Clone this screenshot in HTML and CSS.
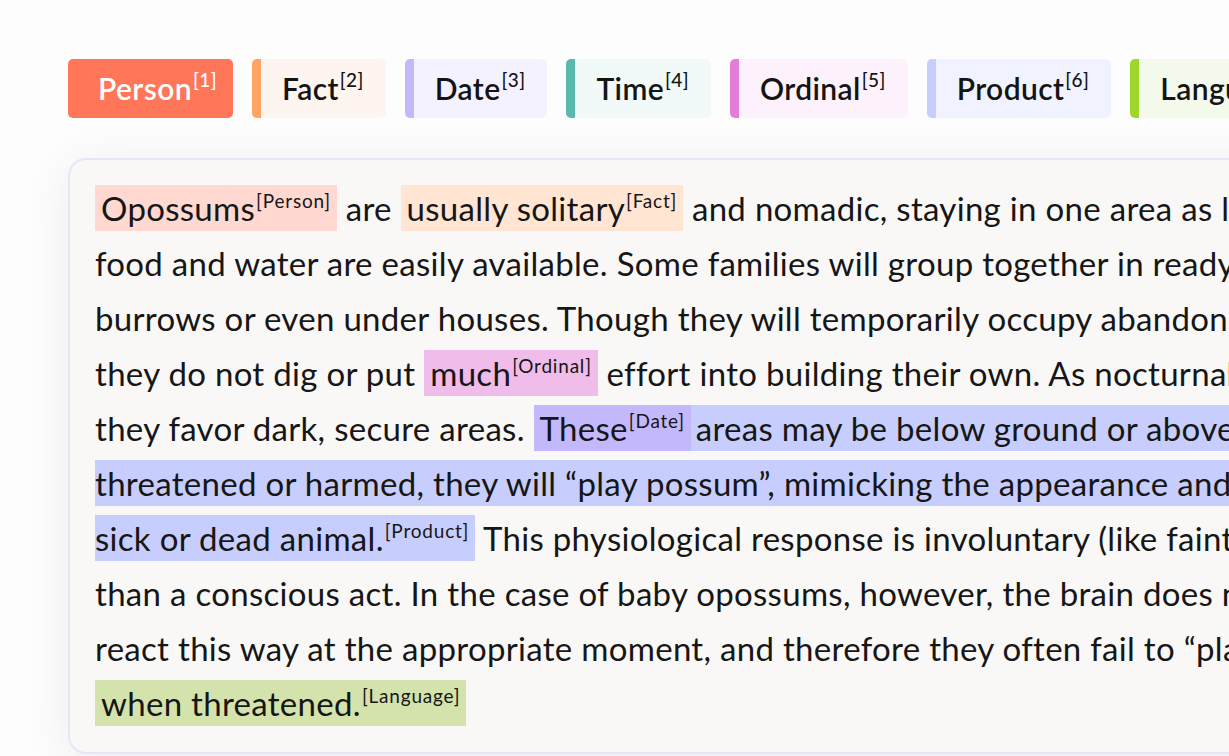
FILE: index.html
```html
<!DOCTYPE html>
<html lang="en">
<head>
<meta charset="utf-8">
<title>Entity highlighter</title>
<link rel="stylesheet" href="styles.css">
</head>
<body>
<main class="page">
  <div class="legend">
    <span class="tag tag-person">Person<sup>[1]</sup></span>
    <span class="tag tag-fact">Fact<sup>[2]</sup></span>
    <span class="tag tag-date">Date<sup>[3]</sup></span>
    <span class="tag tag-time">Time<sup>[4]</sup></span>
    <span class="tag tag-ordinal">Ordinal<sup>[5]</sup></span>
    <span class="tag tag-product">Product<sup>[6]</sup></span>
    <span class="tag tag-language">Language<sup>[7]</sup></span>
  </div>
  <section class="card">
    <p class="text"><span class="hl hl-person">Opossums<sup>[Person]</sup></span> are <span class="hl hl-fact">usually solitary<sup>[Fact]</sup></span> and nomadic, staying in one area as long as<br>food and water are easily available. Some families will group together in ready-made<br>burrows or even under houses. Though they will temporarily occupy abandoned burrows,<br>they do not dig or put <span class="hl hl-ordinal">much<sup>[Ordinal]</sup></span> effort into building their own. As nocturnal animals,<br>they favor dark, secure areas. <span class="hl hl-product"><span class="hl-date">These<sup>[Date]</sup></span> areas may be below ground or above. When<br>threatened or harmed, they will “play possum”, mimicking the appearance and smell of a<br>sick or dead animal.<sup>[Product]</sup></span> This physiological response is involuntary (like fainting), rather<br>than a conscious act. In the case of baby opossums, however, the brain does not always<br>react this way at the appropriate moment, and therefore they often fail to “play dead”<br><span class="hl hl-language">when threatened.<sup>[Language]</sup></span></p>
  </section>
</main>
</body>
</html>
```
FILE: styles.css
```css
html, body {
  margin: 0;
  padding: 0;
  background: #fdfdfd;
  overflow: hidden;
}

.page {
  width: 1229px;
  height: 756px;
  padding: 59px 0 0 68px;
  box-sizing: border-box;
  font-family: "Lato", "Liberation Sans", sans-serif;
  color: #161616;
}

.legend {
  display: flex;
  gap: 19px;
  flex-wrap: nowrap;
  width: max-content;
}

.tag {
  flex-shrink: 0;
  display: block;
  height: 59px;
  line-height: 59px;
  box-sizing: border-box;
  padding: 0 21px 0 21px;
  border-left: 9px solid;
  border-radius: 5px;
  font-size: 30px;
  font-weight: 600;
  letter-spacing: 0.4px;
  color: #141414;
  white-space: nowrap;
}

.tag sup {
  font-size: 19px;
  font-weight: 500;
  vertical-align: 13px;
  line-height: 0;
  margin-left: 1px;
  letter-spacing: 0.4px;
}

.tag-person { background: #ff7658; border-left-color: #ff7658; color: #ffffff; padding-right: 16px; }
.tag-fact { background: #fff5f0; border-left-color: #ffa463; padding-right: 22px; }
.tag-date { background: #f4f2ff; border-left-color: #c4b8fd; padding-right: 22px; }
.tag-time { background: #f2f9f9; border-left-color: #5bb8ad; padding-right: 22px; }
.tag-ordinal { background: #fdf1fb; border-left-color: #e37dd6; padding-right: 22px; }
.tag-product { background: #f0f3ff; border-left-color: #c7cdfc; padding-right: 22px; }
.tag-language { background: #f3f9eb; border-left-color: #9fd62a; }

.card {
  margin-top: 40px;
  width: 1500px;
  height: 596px;
  box-sizing: border-box;
  background: #f9f8f7;
  border: 2px solid #e4e6fa;
  border-radius: 18px;
  box-shadow: 0 8px 50px rgba(0, 0, 0, 0.07);
  padding: 21px 25px;
}

.text {
  margin: 0;
  font-size: 33px;
  line-height: 55px;
  letter-spacing: 0.3px;
  white-space: nowrap;
  color: #161616;
}

.text sup {
  font-size: 19px;
  line-height: 0;
  vertical-align: 13px;
  margin-left: 1px;
  letter-spacing: 0.8px;
}

.hl {
  padding: 3px 6px;
}

.hl-person { background: #fed8d1; }
.hl-fact { background: #ffe5d2; }
.hl-ordinal { background: #f0bcea; }
.hl-product { background: #c7cdfc; }
.hl-date { background: #c4b8fd; padding: 3px 6px; margin-left: -6px; margin-right: -4px; }
.hl-language { background: #d4e3ab; }
```
